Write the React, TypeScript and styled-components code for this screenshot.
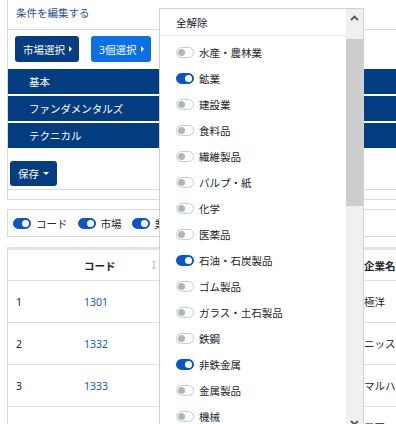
import React from "react";
import styled, { createGlobalStyle } from "styled-components";

const Global = createGlobalStyle`
  html, body { margin: 0; padding: 0; background: #fff; overflow: hidden; }
  body {
    font-family: "Noto Sans", "Noto Sans CJK JP", sans-serif;
    font-size: 10.5px;
    color: #212529;
  }
  * { box-sizing: border-box; }
`;

const Page = styled.div`
  position: relative;
  width: 560px;
  height: 424px;
  overflow: hidden;
  padding-left: 7px;
`;

const EditCard = styled.div`
  border-left: 1px solid #d6d9dd;
  border-bottom: 1px solid #d6d9dd;
`;

const CardHeader = styled.div`
  height: 30px;
  display: flex;
  align-items: center;
  padding: 0 0 4px 8px;
  border-bottom: 1px solid #d6d9dd;
  color: #1f4f8c;
`;

const CardBody = styled.div`
  display: flex;
  flex-direction: column;
`;

const ButtonRow = styled.div`
  display: flex;
  gap: 12px;
  padding: 6px 0 7px 7px;
`;

const ActionButton = styled.button<{ $bright?: boolean }>`
  height: 26px;
  padding: 0 7px 0 8px;
  border: none;
  border-radius: 3px;
  background: ${(p) => (p.$bright ? "#0c6fe2" : "#063d80")};
  color: #fff;
  font: inherit;
  display: flex;
  align-items: center;
  gap: 4px;
  &::after {
    content: "";
    border-left: 3px solid #fff;
    border-top: 3px solid transparent;
    border-bottom: 3px solid transparent;
  }
`;

const CategoryBar = styled.div`
  height: 25px;
  margin-bottom: 2px;
  background: #033c7f;
  color: #fff;
  display: flex;
  align-items: center;
  padding-left: 21px;
`;

const SaveArea = styled.div`
  padding: 11px 0 3px 2px;
  border-bottom: 1px solid #d6d9dd;
`;

const SaveButton = styled.button`
  height: 25px;
  padding: 0 8px;
  border: none;
  border-radius: 3px;
  background: #063d80;
  color: #fff;
  font: inherit;
  display: flex;
  align-items: center;
  gap: 4px;
  &::after {
    content: "";
    border-top: 3px solid #fff;
    border-left: 3px solid transparent;
    border-right: 3px solid transparent;
  }
`;

const CardFoot = styled.div`
  height: 9px;
`;

const ToggleCard = styled.div`
  margin-top: 9px;
  height: 28px;
  border: 1px solid #d6d9dd;
  border-right: none;
  display: flex;
  align-items: center;
  padding-left: 5px;
  gap: 10px;
`;

const ToggleLabel = styled.label`
  display: flex;
  align-items: center;
  gap: 5px;
  white-space: nowrap;
`;

const Switch = styled.span<{ $on?: boolean }>`
  flex: none;
  width: 18px;
  height: 11px;
  border-radius: 6px;
  padding: 1px;
  border: 1px solid ${(p) => (p.$on ? "#0b57c2" : "#c5cad0")};
  background: ${(p) => (p.$on ? "#0b57c2" : "#fff")};
  display: flex;
  align-items: center;
  justify-content: ${(p) => (p.$on ? "flex-end" : "flex-start")};
  &::after {
    content: "";
    width: 7px;
    height: 7px;
    border-radius: 50%;
    background: ${(p) => (p.$on ? "#fff" : "#adb5bd")};
  }
`;

const TableCard = styled.div`
  margin-top: 10px;
  border-left: 1px solid #d6d9dd;
  border-top: 3px solid #dfe2e6;
`;

const Row = styled.div<{ $head?: boolean }>`
  display: grid;
  grid-template-columns: 67px 90px 190px 200px;
  height: ${(p) => (p.$head ? "31px" : "42px")};
  border-bottom: 1px solid #dee2e6;
  font-weight: ${(p) => (p.$head ? 700 : 400)};
`;

const Cell = styled.div`
  display: flex;
  align-items: center;
  padding: 0 9px;
  gap: 4px;
  white-space: nowrap;
  &:first-child {
    padding-left: 8px;
  }
`;

const CodeLink = styled.a`
  color: #1d5aa6;
  text-decoration: none;
`;

const SortIcon = styled.svg`
  margin-left: auto;
  margin-right: -1px;
`;

const Dropdown = styled.div`
  position: absolute;
  top: 8px;
  left: 159px;
  width: 205px;
  height: 424px;
  border: 1px solid #cfd2d6;
  background: #fff;
  display: flex;
`;

const DropContent = styled.div`
  flex: 1;
  display: flex;
  flex-direction: column;
  overflow: hidden;
`;

const DropHeader = styled.div`
  flex: none;
  height: 27px;
  border-bottom: 1px solid #e3e5e8;
  display: flex;
  align-items: center;
  padding-left: 16px;
`;

const DropList = styled.div`
  padding-top: 3px;
  display: flex;
  flex-direction: column;
`;

const DropItem = styled.div`
  flex: none;
  height: 26px;
  display: flex;
  align-items: center;
  gap: 5px;
  padding-left: 16px;
  white-space: nowrap;
`;

const ScrollBar = styled.div`
  flex: none;
  width: 17px;
  background: #f0f0f0;
  display: flex;
  flex-direction: column;
`;

const ScrollButton = styled.div`
  height: 17px;
  display: flex;
  align-items: center;
  justify-content: center;
`;

const ScrollGap = styled.div`
  height: 13px;
`;

const ScrollThumb = styled.div`
  height: 167px;
  background: #cdcdcd;
`;

const ScrollTrack = styled.div`
  flex: 1;
`;

const Chevron = ({ down }: { down?: boolean }) => (
  <svg width="9" height="6" viewBox="0 0 9 6">
    <polyline
      points={down ? "1,1 4.5,4.5 8,1" : "1,5 4.5,1.5 8,5"}
      fill="none"
      stroke="#5a5a5a"
      strokeWidth="1.8"
    />
  </svg>
);

const SortArrows = () => (
  <SortIcon width="6" height="10" viewBox="0 0 6 10">
    <g fill="none" stroke="#b3b7bc" strokeWidth="0.9">
      <line x1="3" y1="1" x2="3" y2="9" />
      <polyline points="1,2.8 3,0.8 5,2.8" />
      <polyline points="1,7.2 3,9.2 5,7.2" />
    </g>
  </SortIcon>
);

const industries: [string, boolean][] = [
  ["水産・農林業", false],
  ["鉱業", true],
  ["建設業", false],
  ["食料品", false],
  ["繊維製品", false],
  ["パルプ・紙", false],
  ["化学", false],
  ["医薬品", false],
  ["石油・石炭製品", true],
  ["ゴム製品", false],
  ["ガラス・土石製品", false],
  ["鉄鋼", false],
  ["非鉄金属", true],
  ["金属製品", false],
  ["機械", false],
  ["電気機器", false],
];

const rows = [
  ["1", "1301", "東証プライム", "極洋"],
  ["2", "1332", "東証プライム", "ニッスイ"],
  ["3", "1333", "東証プライム", "マルハニチロ"],
  ["4", "1375", "東証プライム", "雪国まいたけ"],
];

export default function App() {
  return (
    <>
      <Global />
      <Page>
        <EditCard>
          <CardHeader>条件を編集する</CardHeader>
          <CardBody>
            <ButtonRow>
              <ActionButton>市場選択</ActionButton>
              <ActionButton $bright>3個選択</ActionButton>
            </ButtonRow>
            <CategoryBar>基本</CategoryBar>
            <CategoryBar>ファンダメンタルズ</CategoryBar>
            <CategoryBar>テクニカル</CategoryBar>
            <SaveArea>
              <SaveButton>保存</SaveButton>
            </SaveArea>
            <CardFoot />
          </CardBody>
        </EditCard>

        <ToggleCard>
          <ToggleLabel>
            <Switch $on />
            コード
          </ToggleLabel>
          <ToggleLabel>
            <Switch $on />
            市場
          </ToggleLabel>
          <ToggleLabel>
            <Switch $on />
            業種
          </ToggleLabel>
          <ToggleLabel>
            <Switch $on />
            企業名
          </ToggleLabel>
        </ToggleCard>

        <TableCard>
          <Row $head>
            <Cell />
            <Cell>
              コード
              <SortArrows />
            </Cell>
            <Cell>市場</Cell>
            <Cell>企業名</Cell>
          </Row>
          {rows.map((r) => (
            <Row key={r[0]}>
              <Cell>{r[0]}</Cell>
              <Cell>
                <CodeLink href="#">{r[1]}</CodeLink>
              </Cell>
              <Cell>{r[2]}</Cell>
              <Cell>{r[3]}</Cell>
            </Row>
          ))}
        </TableCard>

        <Dropdown>
          <DropContent>
            <DropHeader>全解除</DropHeader>
            <DropList>
              {industries.map(([name, on]) => (
                <DropItem key={name}>
                  <Switch $on={on} />
                  {name}
                </DropItem>
              ))}
            </DropList>
          </DropContent>
          <ScrollBar>
            <ScrollButton>
              <Chevron />
            </ScrollButton>
            <ScrollGap />
            <ScrollThumb />
            <ScrollTrack />
            <ScrollButton>
              <Chevron down />
            </ScrollButton>
          </ScrollBar>
        </Dropdown>
      </Page>
    </>
  );
}
